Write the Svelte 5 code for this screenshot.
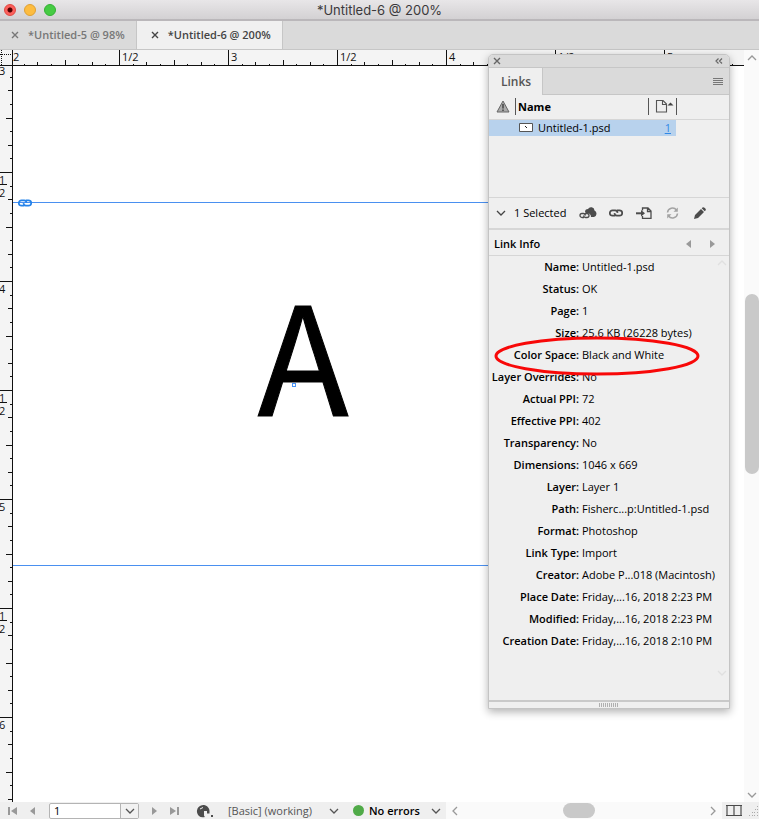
<script>
  const STEP = 109 / 8;
  const SIZES = [12, 2, 4, 2, 6, 2, 4, 2];

  let width = $state(759);
  let height = $state(753);

  const ticks = (length) =>
    Array.from({ length: Math.ceil(length / STEP) + 1 }, (_, i) => ({
      pos: Math.round(i * STEP - 3),
      size: SIZES[i % 8]
    })).filter((t) => t.pos > 0);

  const labels = (length, first) =>
    Array.from({ length: Math.max(0, Math.floor((length - 30) / 109) + 1) }, (_, i) => ({
      pos: i * 109,
      half: i % 2 === 1,
      text: i % 2 ? '1/2' : String(first + i / 2)
    }));

  let topTicks = $derived(ticks(width - 28));
  let sideTicks = $derived(ticks(height - 16));
  let topLabels = $derived(labels(width - 28, 2));
  let sideLabels = $derived(labels(height - 16, 3));

  const info = [
    ['Name', 'Untitled-1.psd'],
    ['Status', 'OK'],
    ['Page', '1'],
    ['Size', '25.6 KB (26228 bytes)'],
    ['Color Space', 'Black and White'],
    ['Layer Overrides', 'No'],
    ['Actual PPI', '72'],
    ['Effective PPI', '402'],
    ['Transparency', 'No'],
    ['Dimensions', '1046 x 669'],
    ['Layer', 'Layer 1'],
    ['Path', 'Fisherc...p:Untitled-1.psd'],
    ['Format', 'Photoshop'],
    ['Link Type', 'Import'],
    ['Creator', 'Adobe P...018 (Macintosh)'],
    ['Place Date', 'Friday,...16, 2018 2:23 PM'],
    ['Modified', 'Friday,...16, 2018 2:23 PM'],
    ['Creation Date', 'Friday,...16, 2018 2:10 PM']
  ];

  let page = $state('1');
</script>

{#snippet cross()}
  <svg width="8" height="8" viewBox="0 0 8 8"><path d="M1 1l6 6M7 1l-6 6" stroke="currentColor" stroke-width="1.4" /></svg>
{/snippet}

{#snippet chevron(d)}
  <svg width="10" height="10" viewBox="0 0 10 10"><path {d} fill="none" stroke="currentColor" stroke-width="1.3" /></svg>
{/snippet}

{#snippet chain()}
  <svg width="14" height="8" viewBox="0 0 14 8" fill="none" stroke="currentColor" stroke-width="1.7">
    <path d="M6.2 6.7H3.500a2.700 2.700 0 0 1 0-5.400h2.700q2 .2 2.400 2.500M7.800 1.300h2.700a2.700 2.700 0 0 1 0 5.400H7.800q-2-.2-2.400-2.500" />
  </svg>
{/snippet}

<div class="app">
  <header class="title">
    <div class="lights">
      <button class="light red" aria-label="Close"></button>
      <button class="light yellow" aria-label="Minimize"></button>
      <button class="light green" aria-label="Zoom"></button>
    </div>
    <h1>*Untitled-6 @ 200%</h1>
  </header>

  <nav class="tabs">
    <div class="tab"><button aria-label="Close tab">{@render cross()}</button><a href="#five">*Untitled-5 @ 98%</a></div>
    <div class="tab active"><button aria-label="Close tab">{@render cross()}</button><a href="#six">*Untitled-6 @ 200%</a></div>
  </nav>

  <main bind:clientWidth={width} bind:clientHeight={height}>
    <div class="corner"></div>
    <svg class="ruler top">
      {#each topTicks as t}
        <rect x={t.pos} y={t.size === 12 ? 0 : 16 - t.size} width="1" height={t.size === 12 ? 16 : t.size} />
      {/each}
      {#each topLabels as l}
        <text x={l.pos} y="11">{l.text}</text>
      {/each}
    </svg>
    <svg class="ruler side">
      {#each sideTicks as t}
        <rect x={12 - t.size} y={t.pos} width={t.size} height="1" />
      {/each}
      {#each sideLabels as l}
        {#if l.half}
          <text x="-1" y={l.pos + 9}>1</text>
          <rect x="0" y={l.pos + 9} width="7" height="1" />
          <text x="-1" y={l.pos + 22}>2</text>
        {:else}
          <text x="-1" y={l.pos + 9}>{l.text}</text>
        {/if}
      {/each}
    </svg>
    <section class="canvas">
      <div class="guide first"><span>{@render chain()}</span></div>
      <div class="guide second"></div>
      <svg class="artwork">
        <text x="290" y="350" text-anchor="middle">A</text>
        <rect x="279.500" y="317.500" width="3" height="3" />
      </svg>
    </section>
    <div class="vscroll">
      <button aria-label="Scroll up">{@render chevron('M1 7l4-4 4 4')}</button>
      <div class="track"><i></i></div>
      <button aria-label="Scroll down">{@render chevron('M1 3l4 4 4-4')}</button>
    </div>
  </main>

  <footer>
    <div class="status">
      <div class="nav">
        <button aria-label="First page"><svg width="9" height="8" viewBox="0 0 9 8"><path d="M0 0h2v8H0zM9 0v8L3 4z" fill="currentColor" /></svg></button>
        <button aria-label="Previous page"><svg width="5" height="8" viewBox="0 0 5 8"><path d="M5 0v8L0 4z" fill="currentColor" /></svg></button>
      </div>
      <div class="pagebox">
        <input aria-label="Page" bind:value={page} />
        <button aria-label="Choose page">{@render chevron('M1 3l4 4 4-4')}</button>
      </div>
      <div class="nav next">
        <button aria-label="Next page"><svg width="5" height="8" viewBox="0 0 5 8"><path d="M0 0v8l5-4z" fill="currentColor" /></svg></button>
        <button aria-label="Last page"><svg width="9" height="8" viewBox="0 0 9 8"><path d="M7 0h2v8H7zM0 0v8l6-4z" fill="currentColor" /></svg></button>
      </div>
      <button class="open" aria-label="Open">
        <svg width="18" height="14" viewBox="0 0 18 14">
          <path d="M3 12A6.300 6.300 0 1 1 13.500 8v1.500H11V7H8v4l1 2Q5 14 3 12z" fill="#4c4c4c" />
          <path d="M8 7v4l1 2h2V9.500V7z" fill="#efefef" />
          <path d="M4 5l3-1.500" stroke="#efefef" />
          <rect x="15" y="11" width="2" height="2" fill="#4c4c4c" />
        </svg>
      </button>
      <div class="pick profile">
        <select aria-label="Preflight profile"><option>[Basic] (working)</option></select>
        {@render chevron('M1 3l4 4 4-4')}
      </div>
      <div class="pick errors">
        <i class="dot"></i>
        <select aria-label="Preflight status"><option>No errors</option></select>
        {@render chevron('M1 3l4 4 4-4')}
      </div>
    </div>
    <div class="hscroll">
      <button aria-label="Scroll left">{@render chevron('M7 1L3 5l4 4')}</button>
      <i></i>
      <button aria-label="Scroll right">{@render chevron('M3 1l4 4-4 4')}</button>
    </div>
    <div class="split">
      <button aria-label="Split layout"><svg width="16" height="11" viewBox="0 0 16 11"><path d="M1 0v11M8 0v11M15 0v11" stroke="#8e8e8e" stroke-width="2" /><path d="M0 .5h16M0 10.500h16" stroke="#4a4a4a" /></svg></button>
      <svg width="10" height="10" viewBox="0 0 10 10"><path d="M8 .5h1M6 3.500h1m1 0h1M3 6.500h1m1 0h1m2 0h1M0 9.500h1m2 0h1m1 0h1m2 0h1" stroke="#aaa" /></svg>
    </div>
  </footer>

  <aside class="panel">
    <div class="strip">
      <button aria-label="Close panel">{@render cross()}</button>
      <button aria-label="Collapse panel"><svg width="8" height="6" viewBox="0 0 8 6"><path d="M3.500.5L1 3l2.500 2.500M7 .5L4.500 3 7 5.500" fill="none" stroke="currentColor" stroke-width="1.2" /></svg></button>
    </div>
    <div class="paneltabs">
      <h2>Links</h2>
      <button aria-label="Panel menu"><svg width="10" height="8" viewBox="0 0 10 8"><path d="M0 .5h10M0 2.500h10M0 4.500h10M0 6.500h10" stroke="#777" /></svg></button>
    </div>
    <table>
      <thead>
        <tr>
          <th class="warn"><svg width="14" height="13" viewBox="0 0 14 13"><path d="M7 1l6 11H1z" fill="#aaa" stroke="#666" /><path d="M7 4v4.500M7 9.500V11" stroke="#444" stroke-width="1.5" /></svg></th>
          <th class="name">Name</th>
          <th class="pg"><svg width="19" height="13" viewBox="0 0 19 13"><path d="M1.500.5H8l3.500 3.500v8h-10zM7.500.5V4.500h4" fill="none" stroke="#555" stroke-width="1.1" /><path d="M12.500 5.500h6L15.500 2.500z" fill="#444" /></svg></th>
          <th></th>
        </tr>
      </thead>
      <tbody>
        <tr>
          <td></td>
          <td class="file"><div><svg width="14" height="9" viewBox="0 0 14 9"><path d="M.5.5h13v8H.5z" fill="#fff" stroke="#555" /><path d="M6 3l2 2" stroke="#222" /></svg>Untitled-1.psd</div></td>
          <td class="num"><a href="#page1">1</a></td>
          <td></td>
        </tr>
      </tbody>
    </table>
    <div class="rest"></div>
    <div class="tools">
      <button class="fold" aria-label="Hide link info">{@render chevron('M1 3l4 4 4-4')}</button>
      <span>1 Selected</span>
      <div class="actions">
        <button aria-label="Relink from library"><svg width="18" height="12" viewBox="0 0 18 12"><path d="M6 5a3 3 0 0 1 3-3 3.500 3.500 0 0 1 6.500 1.500A3.500 3.500 0 0 1 15 10h-3q0-4-5-4z" fill="#4c4c4c" /><path d="M5 10.500H3a2 2 0 0 1 0-4h1.500Q6 6.500 6.500 8.500M6 6.500h2a2 2 0 0 1 0 4H6.500Q5 10.500 4.500 8.500" fill="none" stroke="#4c4c4c" stroke-width="1.300" /></svg></button>
        <button aria-label="Relink">{@render chain()}</button>
        <button aria-label="Go to link"><svg width="16" height="12" viewBox="0 0 16 12" fill="none" stroke="#4c4c4c" stroke-width="1.300"><path d="M6.500 3.500V1H12l3 3v7.300H6.500V9M11.500 1v3.500H15" /><path d="M0 6.300h6" stroke-width="2" /><path d="M5 3v6.500l4-3.200z" fill="#4c4c4c" stroke="none" /></svg></button>
        <button aria-label="Update link"><svg width="13" height="12" viewBox="0 0 13 12" fill="none" stroke="#a3a3a3" stroke-width="1.500"><path d="M1.500 5.500a5 5 0 0 1 9-2.500M11.500 6.500a5 5 0 0 1-9 2.500" /><path d="M11.800.5v4.300H7.500zM1.200 11.500V7.200h4.300z" fill="#a3a3a3" stroke="none" /></svg></button>
        <button aria-label="Edit original"><svg width="12" height="12" viewBox="0 0 12 12"><path d="M0 12l1-4 6-6 3 3-6 6zM7.700 1.300L8.500.5q1-.8 2 .2l.8.8q1 1 .2 2l-.8.8z" fill="#4c4c4c" /></svg></button>
      </div>
    </div>
    <div class="infohead">
      <h3>Link Info</h3>
      <button aria-label="Previous link"><svg width="5" height="8" viewBox="0 0 5 8"><path d="M5 0v8L0 4z" fill="#999" /></svg></button>
      <button aria-label="Next link"><svg width="5" height="8" viewBox="0 0 5 8"><path d="M0 0v8l5-4z" fill="#999" /></svg></button>
    </div>
    <div class="details">
      <dl>
        {#each info as [label, value]}
          <div><dt>{label}:</dt><dd>{value}</dd></div>
        {/each}
      </dl>
      <div class="hint">
        {@render chevron('M1 7l4-4 4 4')}
        {@render chevron('M1 3l4 4 4-4')}
      </div>
    </div>
    <div class="grip"><i></i></div>
    <svg class="mark" viewBox="0 0 206 42"><ellipse cx="103" cy="21" rx="101" ry="18" fill="none" stroke="#f80808" stroke-width="3" /></svg>
  </aside>
</div>

<style>
  :global(body) { margin: 0; }
  .app {
    position: relative;
    display: flex;
    flex-direction: column;
    height: 100vh;
    overflow: hidden;
    background: #fff;
    color: #000;
    font: 11px/16px "Open Sans", "Noto Sans", sans-serif;
  }
  button {
    display: flex;
    align-items: center;
    justify-content: center;
    padding: 0;
    border: 0;
    background: none;
    color: inherit;
  }
  svg { display: block; flex: none; }
  h1, h2, h3, dl, dd { margin: 0; }
  a { color: inherit; text-decoration: none; }

  .title {
    display: flex;
    align-items: center;
    box-sizing: border-box;
    height: 21px;
    border-bottom: 2px solid #bab7ba;
    background: linear-gradient(#e8e6e8, #d3d1d3);
  }
  .lights { display: flex; flex: 1; gap: 8px; padding-left: 4px; }
  .title::after { content: ""; flex: 1; padding-left: 4px; }
  .light { box-sizing: border-box; width: 12px; height: 12px; border: 1px solid #e2463f; border-radius: 50%; background: #fc605c; }
  .red { background: radial-gradient(circle, #4d0000 2px, #fc605c 3px); }
  .yellow { border-color: #dfa033; background: #fdbc40; }
  .green { border-color: #33b034; background: #46cb43; }
  h1 { color: #3b393b; font: 13px/18px Inter, Roboto, sans-serif; }

  .tabs { display: flex; height: 28px; border-bottom: 1px solid #c6c6c6; background: #dadada; }
  .tab {
    display: flex;
    align-items: center;
    gap: 9px;
    padding: 0 11px;
    border-right: 1px solid #c6c6c6;
    color: #777;
    font-weight: 600;
  }
  .tab.active { padding-left: 14px; background: #f0f0f0; color: #444; }

  main { display: grid; flex: 1; grid-template: 16px 1fr / 13px 1fr 15px; min-height: 0; }
  .corner {
    box-sizing: border-box;
    border-right: 1px solid #111;
    border-bottom: 1px solid #111;
    background:
      repeating-linear-gradient(90deg, #111 0 1px, transparent 1px 2px) 0 4px / 100% 1px no-repeat,
      repeating-linear-gradient(#111 0 1px, transparent 1px 2px) 1px 0 / 1px 100% no-repeat,
      #f4f4f4;
  }
  .ruler { box-sizing: border-box; width: 100%; height: 100%; overflow: hidden; background: #f4f4f4; fill: #111; font-size: 11px; }
  .top { border-bottom: 1px solid #111; }
  .side { border-right: 1px solid #111; }
  .canvas { position: relative; overflow: hidden; background: #fff; }
  .guide { position: absolute; left: 0; right: 100px; height: 1px; background: #4a90f0; color: #2583ea; }
  .guide span { position: absolute; left: 5px; top: -3px; }
  .first { top: 136px; }
  .second { top: 499px; }
  .artwork { position: absolute; inset: 0; width: 100%; height: 100%; font: 400 150px "Noto Sans CJK SC", "Open Sans", sans-serif; }
  .artwork text { stroke: #000; stroke-width: 1px; }
  .artwork rect { fill: #fff; stroke: #4a95f8; }

  .vscroll { grid-column: 3; grid-row: 1 / 3; display: flex; flex-direction: column; background: #fafafa; color: #999; }
  .vscroll button { height: 15px; }
  .track { display: flex; flex: 1; padding-top: 229px; }
  .track i { width: 14px; height: 180px; margin-left: 1px; border-radius: 7px; background: #c9c9c9; }

  footer { display: flex; height: 17px; background: #efefef; }
  .status { display: flex; align-items: center; width: 446px; }
  .nav { display: flex; gap: 13px; width: 41px; padding-left: 8px; color: #999; }
  .nav.next { width: 44px; padding-left: 13px; }
  .pagebox { display: flex; box-sizing: border-box; width: 90px; height: 16px; border: 1px solid #b4b4b4; border-radius: 2px; background: #fff; }
  .pagebox input { flex: 1; min-width: 0; padding: 0 4px; border: 0; background: none; font: inherit; line-height: 14px; }
  .pagebox button { width: 18px; border-left: 1px solid #b4b4b4; background: #f2f2f2; color: #555; }
  .open { width: 18px; }
  .pick { display: flex; align-items: center; color: #555; }
  .pick select { flex: 1; min-width: 0; padding: 0; border: 0; appearance: none; background: none; color: inherit; font: inherit; }
  .profile { width: 111px; margin-left: 14px; }
  .errors { width: 88px; margin-left: 14px; }
  .errors select { margin-left: 5px; color: #000; font-weight: 600; }
  .dot { width: 11px; height: 11px; border-radius: 50%; background: #50aa48; }
  .hscroll { display: flex; flex: 1; align-items: center; justify-content: space-between; padding: 0 4px; background: #fafafa; color: #999; }
  .hscroll i { width: 32px; height: 15px; margin-left: -10px; border-radius: 8px; background: #c9c9c9; }
  .split { display: flex; align-items: center; justify-content: space-between; width: 33px; padding-left: 4px; }

  .panel {
    position: absolute;
    top: 54px;
    right: 29px;
    width: 240px;
    border: 1px solid #c4c4c4;
    border-radius: 5px 5px 0 0;
    background: #efefef;
    box-shadow: 0 3px 8px rgba(0, 0, 0, 0.3);
  }
  .strip { display: flex; justify-content: space-between; height: 12px; padding: 0 6px 0 4px; border-bottom: 1px solid #c6c6c6; border-radius: 4px 4px 0 0; background: #dadada; color: #666; }
  .paneltabs { display: flex; justify-content: space-between; height: 27px; padding-right: 6px; background: linear-gradient(#c6c6c6, #c6c6c6) bottom / 100% 1px no-repeat #dadada; }
  h2 { padding: 0 11px 0 12px; border-right: 1px solid #c6c6c6; background: #efefef; color: #555; font: 600 12px/28px "Open Sans", sans-serif; }
  table { width: 100%; border-collapse: collapse; table-layout: fixed; }
  th, td { padding: 0; text-align: left; }
  thead tr { height: 24px; border-bottom: 1px solid #d6d6d6; }
  .warn { width: 26px; }
  .warn svg { margin-left: 7px; }
  .name { width: 130px; }
  .name, .pg { background: linear-gradient(#555, #555) 0 50% / 1px 17px no-repeat; }
  .name { padding-left: 3px; }
  .pg { width: 28px; }
  .pg svg { margin-left: 7px; }
  thead th:last-child { background: linear-gradient(#555, #555) 0 50% / 1px 17px no-repeat; }
  tbody tr { height: 17px; }
  tbody td:not(:last-child) { background: #b8d2ed; }
  .file div { display: flex; align-items: center; gap: 5px; padding-left: 4px; }
  .num a { display: block; padding-right: 5px; color: #3088e6; text-align: right; text-decoration: underline; }
  .rest { height: 61px; border-bottom: 1px solid #d6d6d6; }
  .tools { display: flex; align-items: center; height: 30px; padding-left: 7px; border-bottom: 2px solid #d6d6d6; color: #000; }
  .tools span { width: 65px; padding-left: 8px; }
  .fold { color: #444; }
  .actions { display: flex; gap: 10px; color: #4c4c4c; }
  .actions button { width: 18px; }
  .infohead { display: flex; align-items: center; box-sizing: border-box; height: 26px; padding: 2px 14px 0 5px; border-bottom: 1px solid #d6d6d6; }
  h3 { flex: 1; font: 600 11px/16px "Open Sans", sans-serif; }
  .infohead button + button { margin-left: 19px; }
  .details { display: flex; height: 444px; }
  dl { flex: 1; min-width: 0; }
  .hint { display: flex; flex-direction: column; justify-content: space-between; padding: 2px 2px 22px 0; color: #e0e0e0; }
  dl div { display: grid; grid-template-columns: 90px 1fr; column-gap: 3px; line-height: 22px; }
  dt { font-weight: 600; text-align: right; white-space: nowrap; }
  dd { white-space: nowrap; }
  .grip { display: flex; justify-content: center; height: 6px; border-top: 2px solid #c9c9c9; }
  .grip i { width: 20px; height: 4px; margin-top: 1px; background: repeating-linear-gradient(90deg, #b0b0b0 0 1px, transparent 1px 2px); }
  .mark { position: absolute; top: 280px; left: 5px; width: 206px; height: 42px; }
</style>
